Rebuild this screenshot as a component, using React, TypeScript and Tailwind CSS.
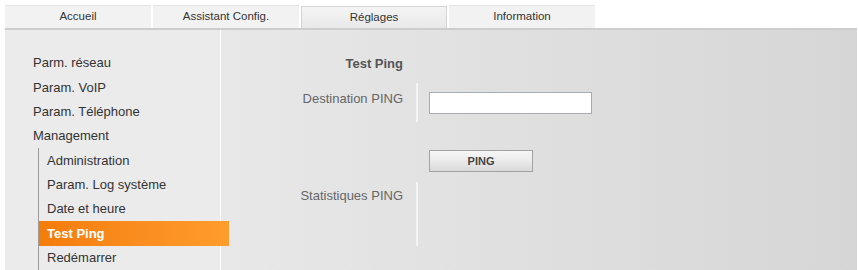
import React from "react";

const tabs = [
  { label: "Accueil", active: false },
  { label: "Assistant Config.", active: false },
  { label: "Réglages", active: true },
  { label: "Information", active: false },
];

const topItems = ["Parm. réseau", "Param. VoIP", "Param. Téléphone", "Management"];
const subItems = [
  { label: "Administration", active: false },
  { label: "Param. Log système", active: false },
  { label: "Date et heure", active: false },
  { label: "Test Ping", active: true },
  { label: "Redémarrer", active: false },
];

const App: React.FC = () => {
  return (
    <div className="w-[859px] h-[270px] overflow-hidden bg-white pl-[5px] pr-[2px] pt-[5px] font-['Liberation_Sans',Arial,sans-serif]">
      {/* Tabs */}
      <div className="flex h-[23px] gap-[2px]">
        {tabs.map((t) => (
          <div
            key={t.label}
            className={
              t.active
                ? "w-[146px] mt-[1px] flex items-center justify-center text-[11.5px] text-[#333] bg-gradient-to-b from-[#f4f4f4] to-[#e9e9e9] border-t border-x border-[#d4d4d4]"
                : "w-[146px] flex items-center justify-center text-[11.5px] text-[#333] bg-[#f2f2f2] border-t border-[#e4e4e4]"
            }
          >
            {t.label}
          </div>
        ))}
      </div>

      {/* Body */}
      <div className="flex h-[242px] border-t-[2px] border-[#cdcdcd]">
        {/* Left nav */}
        <div className="w-[216px] shrink-0 bg-[#ebebeb] border-r border-white pt-[21px] text-[13px] text-[#333]">
          {topItems.map((item) => (
            <div key={item} className="h-[24.2px] flex items-center pl-[28px]">
              {item}
            </div>
          ))}
          <div className="ml-[33px] border-l border-[#9a9a9a] pt-[1px]">
            {subItems.map((s) => (
              <div
                key={s.label}
                className={
                  s.active
                    ? "relative h-[24.2px] mr-[-9px] flex items-center pl-[8px] font-bold text-white bg-gradient-to-r from-[#f47c0a] to-[#ff9c2c]"
                    : "h-[24.2px] flex items-center pl-[8px]"
                }
              >
                {s.label}
              </div>
            ))}
          </div>
        </div>

        {/* Right content */}
        <div className="flex-1 bg-gradient-to-r from-[#e8e8e8] to-[#d6d6d6] pt-[27px] text-[13px]">
          <div className="flex">
            <div className="w-[182px] text-right font-bold text-[#555] leading-[14px]">Test Ping</div>
          </div>

          <div className="flex mt-[12px] h-[39px]">
            <div className="w-[182px] text-right text-[#666] leading-[14px] pt-[9px]">Destination PING</div>
            <div className="ml-[13px] w-[2px] bg-[#f4f4f4]" />
            <div className="ml-[11px] pt-[9px]">
              <input
                type="text"
                className="block w-[163px] h-[22px] bg-white border border-[#a4acb8] outline-none"
              />
            </div>
          </div>

          <div className="flex mt-[28px]">
            <div className="w-[208px]" />
            <button className="w-[104px] h-[22px] border border-[#a2a2a2] bg-gradient-to-b from-[#f6f6f6] via-[#ebebeb] to-[#d9d9d9] text-[11px] font-bold text-[#444] leading-none">
              PING
            </button>
          </div>

          <div className="flex mt-[10px] h-[64px]">
            <div className="w-[182px] text-right text-[#666] leading-[14px] pt-[7px]">Statistiques PING</div>
            <div className="ml-[13px] w-[2px] bg-[#f4f4f4]" />
          </div>
        </div>
      </div>
    </div>
  );
};

export default App;
